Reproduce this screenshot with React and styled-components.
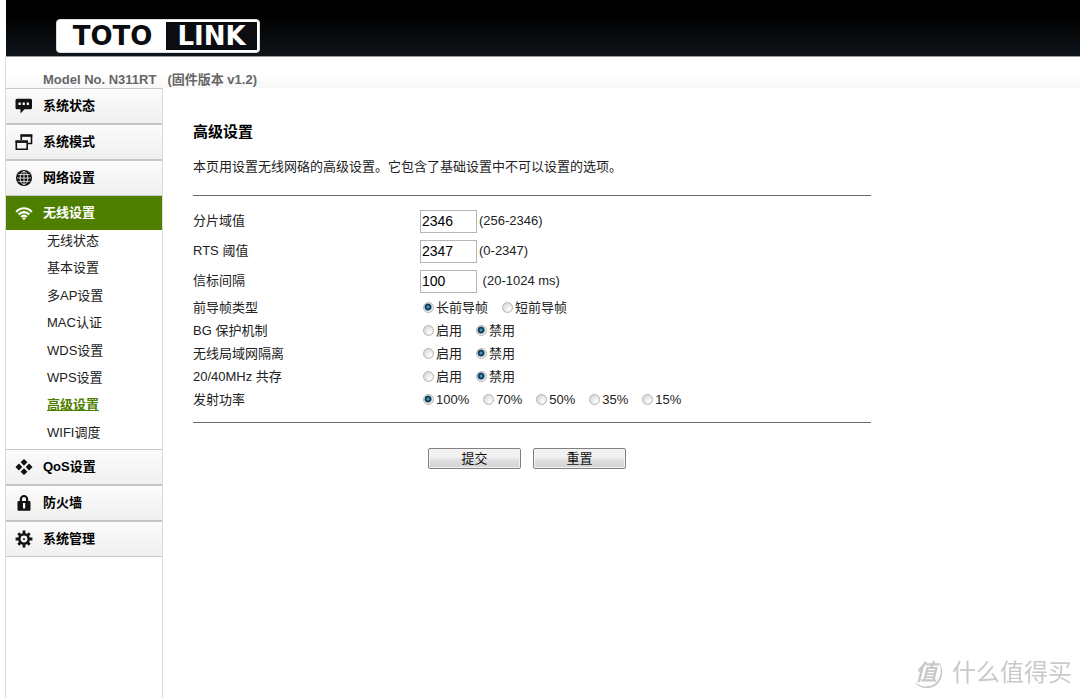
import React, { useState } from 'react'
import styled, { createGlobalStyle } from 'styled-components'

const colors = {
  green: '#4f7f00',
  border: '#c6c6c6',
  line: '#6a6a6a',
  text: '#222',
  muted: '#666',
  watermark: '#c9c9c9',
}

const GlobalStyle = createGlobalStyle`
  * {
    box-sizing: border-box;
  }
  body {
    margin: 0;
    background: #fff;
    color: ${colors.text};
    font: 13px/20px 'Liberation Sans', 'Noto Sans CJK SC', sans-serif;
  }
  button, input {
    font-family: inherit;
  }
`

const ChatIcon = () => (
  <svg width="18" height="18" viewBox="0 0 18 18" aria-hidden="true">
    <path d="M2 1.800h13.500A1.500 1.500 0 0 1 17 3.300v7.400a1.500 1.500 0 0 1-1.500 1.500H9.500L5.500 16.500v-4.300H2A1.500 1.500 0 0 1 .5 10.700V3.300A1.500 1.500 0 0 1 2 1.800z" fill="#111" />
    <path d="M3.500 5.500h2.200v2.500H3.500zM7.600 5.500h2.200v2.500H7.600zM11.700 5.500h2.200v2.500h-2.200z" fill="#fff" />
  </svg>
)

const WindowsIcon = () => (
  <svg width="18" height="18" viewBox="0 0 18 18" fill="none" stroke="#111" aria-hidden="true">
    <path d="M6.300 7V2.200h10.200v8.300H13" strokeWidth="1.600" />
    <path d="M5.500 2.600h11.800" strokeWidth="2.400" />
    <path d="M1.300 8.300h10.900v7.900H1.300z" strokeWidth="1.600" />
    <path d="M.5 8.700H13" strokeWidth="2.400" />
  </svg>
)

const GlobeIcon = () => (
  <svg width="18" height="18" viewBox="0 0 18 18" fill="none" aria-hidden="true">
    <circle cx="9" cy="9" r="8" fill="#111" />
    <g stroke="#fff" strokeWidth=".8">
      <ellipse cx="9" cy="9" rx="3.800" ry="6.500" />
      <path d="M9 2v14M2.200 9h13.600M3.300 5.600h11.400M3.300 12.400h11.400" />
    </g>
  </svg>
)

const WifiIcon = () => (
  <svg width="18" height="18" viewBox="0 0 18 18" fill="none" stroke="#fff" strokeWidth="2.200" aria-hidden="true">
    <path d="M1.200 7.900C5.500 3 12.500 3 16.800 7.900" />
    <path d="M3.700 10.500c3-3.300 7.600-3.300 10.600 0" />
    <path d="M6.200 13c1.700-1.800 3.900-1.800 5.600 0" />
    <path d="M9 13l1.600 1.500L9 16.200l-1.600-1.700z" fill="#fff" stroke="none" />
  </svg>
)

const DiamondsIcon = () => (
  <svg width="18" height="18" viewBox="0 0 18 18" fill="#111" aria-hidden="true">
    <path d="M9 .9l3.400 3.400L9 7.700 5.600 4.300zM9 10.300l3.400 3.400L9 17.100l-3.400-3.400zM3.900 5.600L7.300 9l-3.400 3.400L.5 9zM14.100 5.600L17.500 9l-3.400 3.400L10.700 9z" />
  </svg>
)

const LockIcon = () => (
  <svg width="18" height="18" viewBox="0 0 18 18" fill="none" aria-hidden="true">
    <path d="M5.900 8V5.100a3.100 3.100 0 0 1 6.200 0V8" stroke="#111" strokeWidth="2.200" />
    <rect x="2.500" y="7" width="13" height="9.800" rx="1" fill="#111" />
    <path d="M8 9h2.200v5.400H8z" fill="#fff" />
  </svg>
)

const GearIcon = () => (
  <svg width="18" height="18" viewBox="0 0 18 18" fill="none" stroke="#111" aria-hidden="true">
    <circle cx="9" cy="9" r="4.700" strokeWidth="2.600" />
    <circle cx="9" cy="9" r="1" fill="#111" stroke="none" />
    <path
      d="M9 .6v3M9 14.400v3M.6 9h3M14.400 9h3M3.300 3.300l2.100 2.100M12.600 12.600l2.100 2.100M14.700 3.300l-2.100 2.100M5.400 12.600l-2.100 2.100"
      strokeWidth="2.800"
    />
  </svg>
)

const wirelessLinks = ['无线状态', '基本设置', '多AP设置', 'MAC认证', 'WDS设置', 'WPS设置', '高级设置', 'WIFI调度']

const menu = [
  { label: '系统状态', Icon: ChatIcon },
  { label: '系统模式', Icon: WindowsIcon },
  { label: '网络设置', Icon: GlobeIcon },
  { label: '无线设置', Icon: WifiIcon, links: wirelessLinks },
  { label: 'QoS设置', Icon: DiamondsIcon },
  { label: '防火墙', Icon: LockIcon },
  { label: '系统管理', Icon: GearIcon },
]

const numberFields = [
  { id: 'fragment', label: '分片域值', value: '2346', hint: '(256-2346)' },
  { id: 'rts', label: 'RTS 阈值', value: '2347', hint: '(0-2347)' },
  { id: 'beacon', label: '信标间隔', value: '100', hint: '\u00a0(20-1024 ms)' },
]

const radioFields = [
  { id: 'preamble', label: '前导帧类型', options: ['长前导帧', '短前导帧'], value: '长前导帧' },
  { id: 'protection', label: 'BG 保护机制', options: ['启用', '禁用'], value: '禁用' },
  { id: 'isolation', label: '无线局域网隔离', options: ['启用', '禁用'], value: '禁用' },
  { id: 'coexist', label: '20/40MHz 共存', options: ['启用', '禁用'], value: '禁用' },
  { id: 'power', label: '发射功率', options: ['100%', '70%', '50%', '35%', '15%'], value: '100%' },
]

const RadioRow = ({ id, label, options, value }) => {
  const [selected, setSelected] = useState(value)

  return (
    <Row $height={23} role="radiogroup" aria-labelledby={`${id}-label`}>
      <span id={`${id}-label`}>{label}</span>
      <Options>
        {options.map(option => (
          <Option key={option}>
            <Radio
              type="radio"
              name={id}
              value={option}
              checked={selected === option}
              onChange={() => setSelected(option)}
            />
            {option}
          </Option>
        ))}
      </Options>
    </Row>
  )
}

const Sidebar = () => (
  <SidebarContainer>
    {menu.map(({ label, Icon, links }) => (
      <React.Fragment key={label}>
        <MenuLink href="#" $active={Boolean(links)}>
          <Icon />
          {label}
        </MenuLink>
        {links &&
          <SubMenu>
            {links.map(link => (
              <li key={link}>
                <SubLink href="#" $active={link === '高级设置'}>{link}</SubLink>
              </li>
            ))}
          </SubMenu>
        }
      </React.Fragment>
    ))}
  </SidebarContainer>
)

const App = () => (
  <Page>
    <GlobalStyle />
    <Header>
      <Logo>
        <span>TOTO</span>
        <LogoDark>LINK</LogoDark>
      </Logo>
    </Header>
    <Frame>
      <ModelBar>
        <span>Model No. N311RT</span>
        <span>(固件版本 v1.2)</span>
      </ModelBar>
      <Body>
        <Sidebar />
        <Main>
          <h1>高级设置</h1>
          <p>本页用设置无线网硌的高级设置。它包含了基础设置中不可以设置的选项。</p>
          <form onSubmit={e => e.preventDefault()}>
            <Fields>
              {numberFields.map(({ id, label, value, hint }) => (
                <Row key={id} $height={30}>
                  <label htmlFor={id}>{label}</label>
                  <InputGroup>
                    <TextInput id={id} type="text" defaultValue={value} />
                    <span>{hint}</span>
                  </InputGroup>
                </Row>
              ))}
              {radioFields.map(field => <RadioRow key={field.id} {...field} />)}
            </Fields>
            <Actions>
              <Button type="submit">提交</Button>
              <Button type="reset">重置</Button>
            </Actions>
          </form>
        </Main>
      </Body>
    </Frame>
    <Watermark>
      <WatermarkBadge>
        <svg width="32" height="32" viewBox="0 0 32 32" fill="none" aria-hidden="true">
          <path d="M27 5C33 14 30 25 22 29.500C15 33 6 31 3 25C8 30 15 30.500 20.500 28C28 24 31 15 27 5z" fill={colors.watermark} />
        </svg>
        <span>值</span>
      </WatermarkBadge>
      什么值得买
    </Watermark>
  </Page>
)

export default App

const Page = styled.div`
  min-height: 100vh;
  display: flex;
  flex-direction: column;
  padding-left: 5px;
`

const Header = styled.header`
  height: 57px;
  margin-left: 1px;
  padding: 19px 50px 0;
  background: linear-gradient(#000 30%, #0f151a);
  border-bottom: 1px solid #999;
`

const Logo = styled.div`
  width: 204px;
  height: 34px;
  padding: 2px;
  display: flex;
  align-items: center;
  justify-content: space-between;
  background: #fff;
  border: 1px solid #ddd;
  border-radius: 4px;
  color: #0b0d10;
  font: bold 26px/28px 'DejaVu Sans', sans-serif;
  & > span:first-child {
    flex: 1;
    text-align: center;
  }
`

const LogoDark = styled.span`
  width: 91px;
  height: 28px;
  background: #0b0d10;
  color: #fff;
  text-align: center;
`

const Frame = styled.div`
  flex: 1;
  display: flex;
  flex-direction: column;
`

const ModelBar = styled.div`
  height: 31px;
  padding: 14px 0 0 37px;
  display: flex;
  gap: 11px;
  color: ${colors.muted};
  font-weight: bold;
  line-height: 18px;
  border-left: 1px solid #ddd;
  background: linear-gradient(#fff 60%, #f7f7f7);
`

const Body = styled.div`
  flex: 1;
  display: flex;
`

const SidebarContainer = styled.nav`
  width: 158px;
  flex-shrink: 0;
  border: 1px solid #ddd;
  border-width: 0 1px;
`

const MenuLink = styled.a`
  height: ${({ $active }) => $active ? 34 : 36}px;
  padding-left: 9px;
  display: flex;
  align-items: center;
  gap: 10px;
  background: ${({ $active }) => $active ? colors.green : 'linear-gradient(#fbfbfb, #f0f0f0)'};
  border: solid ${colors.border};
  border-width: ${({ $active }) => $active ? '0' : '1px 0'};
  color: ${({ $active }) => $active ? '#fff' : '#000'};
  font-weight: bold;
  text-decoration: none;
`

const SubMenu = styled.ul`
  height: 219px;
  margin: 0;
  padding: 0 0 0 41px;
  display: grid;
  grid-auto-rows: 1fr;
  list-style: none;
`

const SubLink = styled.a`
  display: block;
  line-height: 22px;
  color: ${({ $active }) => $active ? colors.green : colors.text};
  font-weight: ${({ $active }) => $active ? 'bold' : 'normal'};
  text-decoration: ${({ $active }) => $active ? 'underline' : 'none'};
`

const Main = styled.main`
  flex: 1;
  max-width: 740px;
  padding: 34px 32px 0 30px;
  & > h1 {
    margin: 0 0 15px;
    color: #000;
    font-size: 15px;
    line-height: 20px;
  }
  & > p {
    margin: 0 0 18px;
  }
`

const Fields = styled.div`
  padding: 10px 0 11px;
  border: solid ${colors.line};
  border-width: 1px 0;
`

const Row = styled.div`
  height: ${({ $height }) => $height}px;
  display: grid;
  grid-template-columns: 227px 1fr;
  align-items: center;
`

const InputGroup = styled.div`
  display: flex;
  align-items: center;
  gap: 2px;
`

const TextInput = styled.input`
  width: 57px;
  height: 23px;
  padding: 0 1px;
  border: 1px solid #b5b5b5;
  color: #000;
  font-size: 14px;
`

const Options = styled.div`
  display: flex;
  gap: 14px;
  padding-left: 3px;
`

const Option = styled.label`
  display: flex;
  align-items: center;
  gap: 2px;
`

const Radio = styled.input`
  appearance: none;
  width: 11px;
  height: 11px;
  margin: 0;
  border: 1px solid #b4b4b4;
  border-radius: 50%;
  background: radial-gradient(circle at 70% 70%, #fff, #cfcfcf);
  &:checked {
    background: radial-gradient(circle at 45% 45%, #6cc4e8 0, #12405f 2px, #12405f 3px, #eee 4px);
  }
`

const Actions = styled.div`
  display: flex;
  gap: 12px;
  padding: 25px 0 0 235px;
`

const Button = styled.button`
  width: 93px;
  height: 21px;
  padding: 0;
  border: 1px solid #808080;
  border-radius: 2px;
  background: linear-gradient(#f2f2f2 40%, #dedede 60%, #d2d2d2);
  box-shadow: inset 0 0 0 1px #f4f4f4;
  color: #111;
  font-size: 13px;
  line-height: 18px;
`

const Watermark = styled.div`
  position: fixed;
  right: 8px;
  bottom: 8px;
  display: flex;
  align-items: center;
  gap: 8px;
  color: ${colors.watermark};
  font-size: 24px;
  line-height: 34px;
  pointer-events: none;
`

const WatermarkBadge = styled.span`
  display: grid;
  place-items: center;
  & > * {
    grid-area: 1 / 1;
  }
  & > span {
    padding-right: 4px;
    font-size: 22px;
    font-style: italic;
    font-weight: bold;
  }
`
